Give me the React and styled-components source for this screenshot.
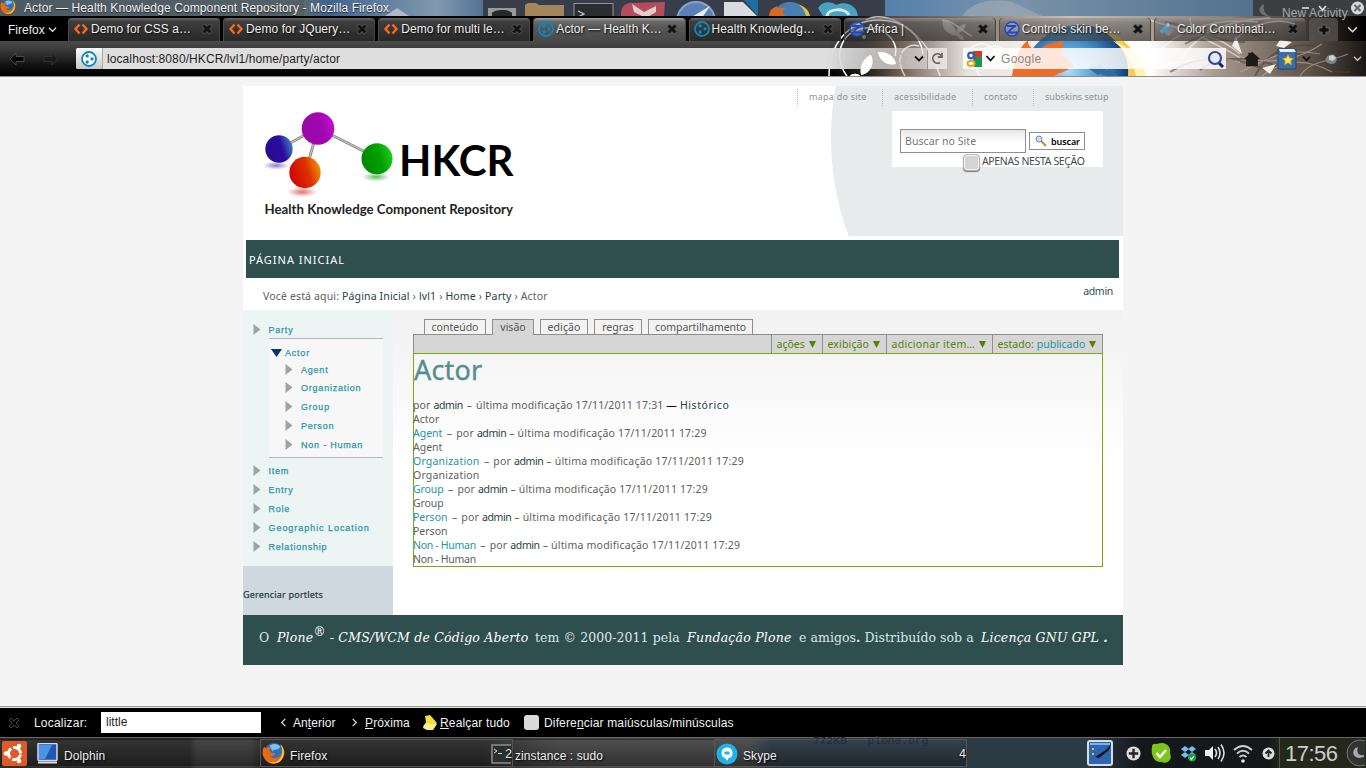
import React from 'react';
import styled, { createGlobalStyle, css } from 'styled-components';

const Global = createGlobalStyle`
  * { box-sizing: border-box; }
  html, body { margin: 0; padding: 0; background: #f4f4f4; }
  body { width: 1366px; height: 768px; overflow: hidden; }
  a { color: inherit; text-decoration: none; }
  svg { display: block; flex: none; }
`;

const sans = '"Liberation Sans", Arial, sans-serif';
const humanist = '"Noto Sans", "Open Sans", sans-serif';

const Screen = styled.div`
  width: 1366px;
  height: 768px;
  display: flex;
  flex-direction: column;
  overflow: hidden;
  font-family: ${sans};
  font-size: 12px;
  background: #f4f4f4;
`;

/* ---------- window chrome ---------- */
const Chrome = styled.header`
  position: relative;
  height: 77px;
  flex: none;
  background: #000;
  border-bottom: 1px solid #8d8d8d;
`;
const Art = styled.svg`
  position: absolute;
  left: 0;
  top: 0;
`;
const TitleBar = styled.div`
  position: relative;
  height: 16px;
  display: flex;
  align-items: center;
  justify-content: space-between;
  padding-left: 24px;
  color: #f4f4f4;
`;
const TitleText = styled.span`
  font-size: 12px;
  letter-spacing: 0.11px;
  white-space: nowrap;
  text-shadow: 0 1px 1px #222;
`;
const Activity = styled.div`
  width: 84px;
  height: 16px;
  color: #a5a5a5;
  line-height: 14px;
  padding-top: 6px;
  letter-spacing: 0.1px;
  white-space: nowrap;
`;
const Tabs = styled.div`
  position: relative;
  height: 25px;
  display: flex;
  padding-top: 2px;
  color: #eee;
`;
const MenuButton = styled.div`
  width: 68px;
  padding-left: 8px;
  display: flex;
  align-items: center;
  gap: 3px;
  font-size: 12px;
`;
const Tab = styled.div`
  width: 152.3px;
  margin-right: 3px;
  display: flex;
  align-items: center;
  padding: 0 7px 1px 5px;
  border-radius: 4px 4px 0 0;
  text-shadow: 1px 1px 2px #000;
  background: ${p => p.$active
    ? 'linear-gradient(#a2a2a2, #6a6a6a 15%, #585858 40%, #484848)'
    : p.$glass
      ? 'linear-gradient(rgba(150,150,150,.7), rgba(95,95,95,.5) 20%, rgba(60,60,60,.62))'
      : 'linear-gradient(#6a6a6a, #3e3e3e 15%, #282828)'};
  box-shadow: inset 1px 0 0 #4a4a4a, inset -1px 0 0 #444;
`;
const TabLabel = styled.span`
  margin-left: 2px;
  width: 110px;
  flex: none;
  white-space: nowrap;
  letter-spacing: 0.05px;
`;
const NewTab = styled.div`
  width: 29px;
  display: grid;
  place-items: center;
  border-radius: 4px 4px 0 0;
  background: rgba(90,90,90,.7);
`;
const TabMenu = styled.div`
  width: 28px;
  display: grid;
  place-items: center;
`;
const NavBar = styled.div`
  position: relative;
  height: 35px;
  display: flex;
  align-items: center;
  padding: 0 3px 0 9px;
`;
const NavArrow = styled.div`
  width: ${p => p.$w}px;
`;
const UrlBar = styled.div`
  width: 851px;
  height: 21px;
  display: flex;
  align-items: center;
  background: linear-gradient(90deg, #dedede 750px, rgba(222,222,222,.66) 830px);
  color: #1e1e1e;
  border-radius: 2px 0 0 2px;
`;
const SiteBadge = styled.div`
  width: 27px;
  height: 21px;
  display: grid;
  place-items: center;
  background: linear-gradient(#fafafa, #c9c9c9);
  border-right: 1px solid #aaa;
  border-radius: 2px 0 0 2px;
`;
const Url = styled.span`
  margin-left: 4px;
  flex: 1;
  letter-spacing: 0.09px;
`;
const Reload = styled.div`
  width: 19px;
  height: 21px;
  margin: 0 16px 0 1px;
  display: grid;
  place-items: center;
  background: rgba(235,232,228,.85);
`;
const SearchBar = styled.div`
  width: 263px;
  height: 21px;
  display: flex;
  align-items: center;
  padding: 0 1px 0 3px;
  background: rgba(255,255,255,.84);
  color: #8e8886;
`;
const Hint = styled.span`
  flex: 1;
  margin-left: 5px;
  letter-spacing: 0.3px;
`;
const Tools = styled.div`
  flex: 1;
  display: flex;
  align-items: center;
  padding-left: 17px;
`;
const Tool = styled.div`
  width: ${p => p.$w}px;
`;

/* ---------- site ---------- */
const Viewport = styled.main`
  flex: 1;
  padding-top: 9px;
  background: #f4f4f4;
  border-bottom: 1px solid #8f9c86;
`;
const Site = styled.div`
  width: 880px;
  margin-left: 243px;
  background: #fff;
  font-family: ${humanist};
  font-size: 10.5px;
  color: #606060;
`;
const SiteHeader = styled.div`
  height: 154px;
  border-bottom: 4px solid #fff;
  display: flex;
  justify-content: space-between;
  background: radial-gradient(circle at 868px 52px, #e7ebeb 279.5px, #fff 280.5px);
`;
const HeaderTools = styled.div`
  width: 326px;
  display: flex;
  flex-direction: column;
`;
const SiteActions = styled.div`
  display: flex;
  margin-top: 3px;
  height: 17px;
  font-size: 9px;
  color: #8f9393;
`;
const SiteAction = styled.a`
  width: ${p => p.$w}px;
  padding-left: 11px;
  line-height: 16px;
  border-left: 1px dotted #b9bcbc;
  letter-spacing: ${p => p.$ls}px;
  white-space: nowrap;
`;
const SearchBox = styled.div`
  width: 211px;
  height: 56px;
  margin: 5px 0 0 95px;
  padding: 18px 0 0 8px;
  background: #fff;
`;
const SearchRow = styled.div`
  display: flex;
  gap: 3px;
  align-items: center;
`;
const SearchField = styled.div`
  width: 126px;
  height: 24px;
  padding-left: 4px;
  border: 1px solid #8f8f8f;
  background: linear-gradient(#e8e8e8, #fff 12px);
  line-height: 22px;
  letter-spacing: 0.08px;
  color: #75787b;
`;
const SearchButton = styled.div`
  width: 56px;
  height: 18px;
  border: 1px solid #8f8f8f;
  display: flex;
  align-items: center;
  gap: 4px;
  padding-left: 5px;
  font-size: 9px;
  font-weight: 600;
  letter-spacing: -0.1px;
  color: #000;
`;
const SectionOnly = styled.div`
  display: flex;
  align-items: flex-start;
  margin-left: 63px;
  gap: 2px;
  line-height: 16px;
  white-space: nowrap;
  letter-spacing: -0.37px;
  color: #4a4a4a;
`;
const Checkbox = styled.span`
  width: 17px;
  height: 17px;
  flex: none;
  margin-top: 1px;
  border: 1px solid #b5b5b5;
  border-radius: 4px;
  box-shadow: 0 1px 1px #777, inset 0 0 0 1px #f4f4f4;
  background: #d6d4d1;
`;
const GlobalNav = styled.nav`
  height: 38px;
  margin: 0 4px 0 3px;
  padding-left: 3px;
  line-height: 40px;
  background: #2f4f4f;
  color: #fff;
  font-size: 11px;
  letter-spacing: 0.98px;
`;
const Crumbs = styled.div`
  height: 32px;
  padding: 0 10px 0 20px;
  display: flex;
  justify-content: space-between;
  line-height: 36px;
`;
const Trail = styled.span`
  letter-spacing: 0.15px;
`;
const User = styled.a`
  color: #2f4f4f;
  line-height: 27px;
  letter-spacing: -0.3px;
`;
const Dark = styled.a`
  color: #1f4242;
`;
const Author = styled(Dark)`
  letter-spacing: -0.4px;
`;
const Wide = styled(Dark)`
  letter-spacing: 0.6px;
`;
const Dash = styled.span`
  margin: 0 ${p => p.$r || 0}px 0 ${p => p.$l || 0}px;
`;
const Columns = styled.div`
  display: flex;
  height: 305px;
`;
const Sidebar = styled.aside`
  width: 150px;
  display: flex;
  flex-direction: column;
  background: #ecf4f4;
`;
const Tree = styled.div`
  height: 256px;
  padding-top: 10px;
  font-family: ${sans};
  font-size: 9px;
  color: #2e97a8;
`;
const TreeRow = styled.div`
  height: ${p => p.$h || 19}px;
  display: flex;
  align-items: center;
  padding-left: ${p => p.$pad ?? 9.5}px;
  gap: ${p => p.$gap ?? 8}px;
  letter-spacing: ${p => p.$ls ?? 0.78}px;
  -webkit-text-stroke: 0.25px #2e97a8;
  white-space: nowrap;
`;
const Branch = styled.div`
  width: 114px;
  height: 120px;
  margin: -1px 0 3px 26px;
  padding-top: 6px;
  border-top: 1px solid #b4b8ba;
  border-bottom: 1px solid #b4b8ba;
  background: #f7f7f7;
`;
const Manage = styled.div`
  flex: 1;
  padding-top: 20px;
  line-height: 18px;
  background: #cfd8df;
  color: #203c3c;
  font-size: 9px;
  letter-spacing: 0.2px;
  -webkit-text-stroke: 0.2px #203c3c;
`;
const Content = styled.section`
  flex: 1;
  padding: 9px 20px 0;
  background: linear-gradient(#f1f1f1, #fff 150px);
`;
const ViewTabs = styled.div`
  display: flex;
  gap: 6px;
  height: 15px;
  padding-left: 11px;
`;
const ViewTab = styled.a`
  width: ${p => p.$w}px;
  height: ${p => (p.$on ? 16 : 15)}px;
  border: 1px solid #8f8f8f;
  border-bottom: 0;
  background: ${p => (p.$on ? '#d6d6d6' : 'transparent')};
  position: relative;
  text-align: center;
  line-height: 15px;
  letter-spacing: ${p => p.$ls || 0}px;
  white-space: nowrap;
  color: #555;
`;
const ActionBar = styled.div`
  height: 19px;
  display: flex;
  justify-content: flex-end;
  border: 1px solid #8f8f8f;
  border-bottom: 0;
  background: #d6d6d6;
  color: #54830a;
  line-height: 18px;
`;
const Action = styled.div`
  width: ${p => p.$w}px;
  padding: 0 6px 0 4.5px;
  display: flex;
  align-items: center;
  justify-content: space-between;
  border-left: 1px solid #8f8f8f;
  letter-spacing: ${p => p.$ls || 0}px;
  white-space: nowrap;
`;
const Teal = styled.a`
  color: #2793a5;
  letter-spacing: ${p => p.$ls || 0}px;
`;
const Article = styled.article`
  height: 214px;
  border: 1px solid #74ae0b;
`;
const Heading = styled.h1`
  margin: 0;
  height: 44px;
  line-height: 32px;
  font-size: 27px;
  font-weight: 400;
  letter-spacing: 0.2px;
  -webkit-text-stroke: 0.3px #548d8d;
  color: #548d8d;
`;
const Line = styled.div`
  height: 14px;
  margin-left: -1px;
  line-height: 14px;
  white-space: nowrap;
  letter-spacing: ${p => p.$ls || 0}px;
`;
const Black = styled.span`
  color: #000;
`;
const Footer = styled.footer`
  height: 50px;
  display: flex;
  align-items: baseline;
  padding: 14px 0 0 16px;
  background: #2f4f4f;
  color: #dde6e6;
  font-family: "DejaVu Serif", serif;
  font-size: 12.5px;
  line-height: 18px;
  white-space: nowrap;
`;
const Run = styled.span`
  width: ${p => p.$w}px;
  flex: none;
  letter-spacing: ${p => p.$ls || 0}px;
  ${p => p.$em && css`
    font-style: italic;
    color: #fff;
  `}
  sup { font-size: 12px; line-height: 0; font-style: normal; vertical-align: 6px; }
`;

/* ---------- find bar and desktop panel ---------- */
const FindBar = styled.div`
  height: 31px;
  flex: none;
  display: flex;
  align-items: center;
  border-top: 1px solid #e8e8e8;
  border-bottom: 1px solid #666;
  background: #000;
  color: #f0f0f0;
`;
const FindCell = styled.div`
  width: ${p => p.$w}px;
  flex: none;
  display: flex;
  align-items: center;
  gap: ${p => p.$gap || 0}px;
  white-space: nowrap;
  letter-spacing: ${p => p.$ls || 0}px;
`;
const FindInput = styled.div`
  width: 160px;
  height: 21px;
  padding-left: 5px;
  line-height: 20px;
  background: #fff;
  color: #222;
`;
const FindCheck = styled.span`
  width: 15px;
  height: 15px;
  border-radius: 3px;
  background: #dcdad6;
`;
const Panel = styled.div`
  position: relative;
  height: 30px;
  flex: none;
  display: flex;
  align-items: center;
  background: linear-gradient(90deg, rgba(0,0,0,0) 190px, rgba(90,90,90,.4) 196px 250px, rgba(0,0,0,0) 262px),
    linear-gradient(90deg, #2b2b2b 0 480px, #484848 560px 750px, rgba(44,58,68,1) 770px 1090px, #15181b 1140px 1270px, #24281a 1280px);
  color: #eee;
`;
const Task = styled.div`
  width: ${p => p.$w}px;
  height: 28px;
  flex: none;
  display: flex;
  align-items: center;
  gap: ${p => p.$gap ?? 6}px;
  padding: 1px ${p => p.$pr || 0}px 0 ${p => p.$pl || 0}px;
  border: 1px solid ${p => (p.$frame ? '#565656' : 'transparent')};
  background: linear-gradient(rgba(255,255,255,.04), rgba(0,0,0,.32));
  text-shadow: 1px 1px 2px #000;
  white-space: nowrap;
`;
const TaskName = styled.span`
  padding-top: 4px;
  letter-spacing: 0.08px;
`;
const Count = styled.span`
  position: relative;
  z-index: 1;
  margin-left: auto;
`;
const TermIcon = styled.div`
  width: 23px;
  margin-left: -24px;
`;
const Ghost = styled.div`
  position: absolute;
  left: 813px;
  top: -3px;
  color: #1d2b33;
  font-family: "Liberation Mono", monospace;
  font-size: 11px;
  line-height: 12px;
  letter-spacing: 0.2px;
  white-space: pre;
`;
const Tray = styled.div`
  flex: 1;
  height: 30px;
  display: flex;
  align-items: center;
  padding-left: 120px;
`;
const TrayCell = styled.div`
  width: ${p => p.$w}px;
  margin-right: ${p => p.$mr || 0}px;
  display: grid;
  place-items: center;
  flex: none;
`;
const Clock = styled.div`
  width: 66px;
  padding-left: 5px;
  height: 30px;
  line-height: 32px;
  border-left: 1px solid #555;
  font-size: 22px;
  letter-spacing: -0.5px;
  color: #ccc;
`;

/* ---------- drawings ---------- */
const Chevron = ({ dir = 'down', s = 9, c = '#ddd', w = 1.4 }) => {
  const d = { down: 'M1 3l4 4 4-4', left: 'M7 1L3 5l4 4', right: 'M3 1l4 4-4 4' }[dir];
  return <svg width={s} height={s} viewBox="0 0 10 10"><path d={d} fill="none" stroke={c} strokeWidth={w} /></svg>;
};
const Cross = ({ c = '#121212', o = '#666' }) => (
  <svg width="12" height="12" viewBox="0 0 12 12">
    <path d="M1 3.500l2.500-2.500L6 3.500l2.500-2.500 2.500 2.500L8.500 6 11 8.500 8.500 11 6 8.500 3.500 11 1 8.500 3.500 6z" fill={c} stroke={o} strokeWidth=".8" />
  </svg>
);
const CodeIcon = () => (
  <svg width="16" height="16" viewBox="0 0 16 16">
    <path d="M6.500 3.500L2.500 8l4 4.500M9.500 3.500l4 4.500-4 4.500" fill="none" stroke="#ff6a13" strokeWidth="2.300" />
  </svg>
);
const PloneIcon = ({ bg = 'none' }) => (
  <svg width="16" height="16" viewBox="0 0 16 16">
    <circle cx="8" cy="8" r="7" fill={bg} stroke="#1088bd" strokeWidth="1.800" />
    <circle cx="6.200" cy="4.900" r="1.700" fill="#1088bd" />
    <circle cx="11" cy="7.900" r="1.700" fill="#1088bd" />
    <circle cx="6.200" cy="11" r="1.700" fill="#1088bd" />
  </svg>
);
const ZIcon = () => (
  <svg width="16" height="16" viewBox="0 0 16 16">
    <circle cx="8" cy="8" r="7" fill="rgba(200,210,235,.35)" stroke="#1b49c4" strokeWidth="1.400" />
    <path d="M3 5h9C9 6 6 9 4 11.500h9.500" fill="none" stroke="#1b49c4" strokeWidth="1.800" />
  </svg>
);
const PaletteIcon = () => (
  <svg width="16" height="16" viewBox="0 0 16 16">
    <path d="M8 1l7 8-5 6-8-5z" fill="#7c8184" />
    <path d="M.5 10l2.500-3 2.500 2.500-2.500 3zM4 7l2.500-3L9 6.500l-2.500 3z" fill="#37a8dc" />
    <path d="M7 4l2-2.500L11 4 9 6.500z" fill="#8fc4e0" />
  </svg>
);
const Arrow = ({ flip, c, o }) => (
  <svg width="16" height="14" viewBox="0 0 16 14" transform={flip ? 'scale(-1 1)' : undefined}>
    <path d="M1 7l6-6v3.500h8v5H7V13z" fill={c} stroke={o} strokeWidth="1" />
  </svg>
);
const FirefoxShape = () => (
  <>
    <circle cx="12.500" cy="11.500" r="10.500" fill="#2d6fc0" />
    <path d="M8 4c4-3 9-2 11 1-2 4-7 2-8 5z" fill="#7fc3ee" />
    <path d="M2 5l3 2c2-2 4-2 5-1-2 1-3 3-1 5l5 1c-1 3-4 3-6 2 2 4 9 4 12-1 2-4 1-8-1-11 6 5 6 13 0 18-5 4-13 3-16-2C0 14 0 9 2 5z" fill="#ea6a10" />
    <path d="M19 2c5 5 5 13 0 18-4 3-8 3-12 1 6 1 11-1 13-6 2-4 1-9-1-13z" fill="#ffc933" />
  </>
);

const ChromeArt = () => (
  <Art width="1366" height="76" viewBox="0 0 1366 76">
    <defs>
      <linearGradient id="sky" x1="0" x2="1"><stop offset="0" stopColor="#4a5c68" /><stop offset=".22" stopColor="#5d6a70" /><stop offset=".24" stopColor="#3f6390" /><stop offset=".32" stopColor="#8299ad" /><stop offset=".36" stopColor="#496b91" /><stop offset=".65" stopColor="#5580ac" /><stop offset=".74" stopColor="#7b93aa" /><stop offset=".92" stopColor="#51718f" /></linearGradient>
      <linearGradient id="nav" x2="0" y2="1"><stop offset="0" stopColor="#4b4b4b" /><stop offset=".25" stopColor="#3a3a3a" /><stop offset=".7" stopColor="#111" /><stop offset="1" stopColor="#000" /></linearGradient>
      <linearGradient id="persona" x1="0" x2="1"><stop offset="0" stopColor="#111" stopOpacity="0" /><stop offset=".13" stopColor="#6b5a4d" /><stop offset=".26" stopColor="#e9e4df" /><stop offset=".6" stopColor="#fff" /><stop offset=".72" stopColor="#a89a8d" /><stop offset=".9" stopColor="#5b4f46" /><stop offset="1" stopColor="#1a1715" /></linearGradient>
      <linearGradient id="personaTop" x1="0" x2="1"><stop offset="0" stopColor="#111" stopOpacity="0" /><stop offset=".12" stopColor="#54483f" /><stop offset=".45" stopColor="#cbbfb4" /><stop offset=".75" stopColor="#8b7c70" /><stop offset=".93" stopColor="#29221d" /><stop offset="1" stopColor="#000" /></linearGradient>
      <radialGradient id="globe" cx=".4" cy=".4"><stop offset="0" stopColor="#a9dcf5" /><stop offset=".5" stopColor="#4d96cc" /><stop offset="1" stopColor="#123e78" /></radialGradient>
      <clipPath id="personaClip"><rect x="826" y="16" width="540" height="60" /></clipPath>
      <clipPath id="titleClip"><rect width="1366" height="16" /></clipPath>
    </defs>
    <rect width="1366" height="16" fill="url(#sky)" />
    <g clipPath="url(#titleClip)">
      <rect width="304" height="16" fill="#4e5a60" opacity=".6" />
      <g transform="translate(0 -1) scale(.66)"><FirefoxShape /></g>
      <rect x="483" width="402" height="16" fill="#373e49" />
      <rect x="488" y="8" width="28" height="10" fill="#9a9a9a" />
      <path d="M492 16v-3c3-4 17-4 20 0v3z" fill="#26282b" />
      <path d="M525 16V5l3-2h8l3 2h25v11z" fill="#a3865c" />
      <rect x="574" y="3.500" width="39" height="14" fill="#2a2e30" stroke="#929699" />
      <path d="M578 11l6 3-6 3" fill="none" stroke="#ccc" strokeWidth="1.200" />
      <path d="M621 16q-1-11 8-13l36-1-1 14z" fill="#b54c5b" />
      <path d="M632 4l12 8 12-6v6l-10 6-12-6z" fill="#e0cdd0" />
      <circle cx="696" cy="21" r="19" fill="#5a80b8" stroke="#8ca3c4" strokeWidth="2" />
      <path d="M690 18l20-12-8 12z" fill="#e6ecf4" />
      <path d="M724 2h19l14 14h-33z" fill="#d9dcde" />
      <path d="M744 0h14v16z" fill="#1d6fa3" />
      <circle cx="790" cy="20" r="18" fill="#477fb5" />
      <path d="M769 16c1-8 5-8 8-10 0 3 5 2 9 2-4 2-4 5-1 8z" fill="#d56a24" />
      <path d="M798 4c8 3 11 7 12 12h-4c-1-5-4-9-8-12z" fill="#e1bd45" />
      <path d="M818 8c6-8 14-6 18-3 12-5 21 2 22 11h-35z" fill="#49a1c2" />
      <path d="M827 16c1-8 19-8 22-1" fill="none" stroke="#dceaf0" strokeWidth="3" />
      <path d="M962 16c10-14 28-18 50-14l30 14z" fill="#a3adb8" opacity=".6" />
      <path d="M385 16l12-8 12 8z" fill="#c8cfd5" opacity=".7" />
      <rect x="1253" width="113" height="16" fill="#3b3f42" />
      <path d="M1264 4c-8 4-5 12 5 12-5-3-6-7-5-12z" fill="#6c7073" />
      <path d="M1302 8h7M1319 6l3.500 4 3.500-4" fill="none" stroke="#e4e4e4" strokeWidth="1.500" />
      <circle cx="1357.500" cy="8" r="6.500" fill="#d9d9d9" />
      <path d="M1354.500 5l6 6M1360.500 5l-6 6" stroke="#666" strokeWidth="2" />
    </g>
    <rect y="41" width="1366" height="35" fill="url(#nav)" />
    <g clipPath="url(#personaClip)">
      <rect x="828" y="16" width="538" height="26" fill="url(#personaTop)" />
      <rect x="828" y="41" width="538" height="35" fill="url(#persona)" />
      <circle cx="1080" cy="84" r="59" fill="url(#globe)" />
      <path d="M1012 76c2-14 6-28 16-36 0 10 8 10 14 8 6-6 16-5 22-8-4 8 2 10-2 14l12 12c-8 6-14 6-20 10z" fill="#ee6d27" />
      <path d="M1096 27c28 8 44 26 46 49h-14c2-20-8-36-32-49z" fill="#f8cd4e" />
      <path d="M1112 40c22 10 32 22 34 36h-10c-2-12-10-26-24-36z" fill="#fff3b0" />
      <path d="M1088 68l12-4 6 6-8 5zM1100 73l10-4 8 6-6 4z" fill="#2c6ba8" />
      <g fill="none" stroke="#fff" strokeWidth="1.500">
        <path d="M829 76c0-32 20-56 50-56 26 0 42 16 44 34" />
        <path d="M847 76c-14-18-8-44 18-48 20-2 34 14 30 28" />
        <path d="M866 20c20-12 60 10 74 56" opacity=".7" />
        <path d="M905 76c-12-20 0-34 14-30M942 20c12 0 20 12 30 16" opacity=".7" />
        <path d="M965 60c6-22 26-20 30-6M980 76c-12-16 4-36 22-28" opacity=".8" />
        <path d="M1150 20c30 12 60 8 90 34M1158 52c26-26 60-34 100-30M1180 60c20-30 50-40 90-42M1140 66c40 0 70-14 100-4M1190 18c0 20 30 26 50 40M1235 40c16-18 44-22 60-16" opacity=".55" />
      </g>
      <g fill="none" stroke="#4e4036" opacity=".55" strokeWidth="2">
        <path d="M1165 22c30 4 50 22 80 20M1185 44c24-14 52-20 76-6M1170 72c30-18 60-18 96-2M1200 70c20-16 60-14 84 0M1255 76c10-20 30-34 60-30M1290 50c20 4 20 24 60 22" />
      </g>
      <g fill="none" stroke="#cfc4b8" opacity=".5" strokeWidth="1.200">
        <path d="M1240 72c20-8 40-26 80-18M1262 76c20-16 44-18 70-4M1238 56c30 10 60 4 84-12M1300 76c10-16 30-14 48-22" />
      </g>
      <path d="M861 75c-2-10 4-18 10-20 4 8 0 18-10 20zM878 52c10 0 16 4 18 12-8 2-16-2-18-12zM850 76c2-3 8-3 10 0z" fill="#fff" />
      <path d="M957 36c-12-2-16-10-14-16 8 2 12 6 13 12 2-6 6-8 10-8-1 6-4 8-8 9 4 2 6 4 6 7-4 0-6-2-7-4z" fill="#e8e4e0" opacity=".6" />
      <path d="M1236 36l6 18-10-8zM1280 40l12 2-8 6-8-2zM1262 68l14-4-6 10z" fill="#f4efe9" />
      <circle cx="864" cy="37" r="2" fill="#bbb" />
    </g>
  </Art>
);
const Leaves = styled(Art)`
  left: 846px;
  top: 10px;
`;

const Logo = () => (
  <svg width="290" height="150" viewBox="0 0 290 150">
    <defs>
      {[['pu', '#c40fd0', '#a006b0', '#9a08a8'], ['bl', '#3f86cc', '#2c0c9c', '#2a0c90'], ['re', '#ee9a00', '#dd3300', '#d40a00'], ['gr', '#1fd01f', '#02a002', '#008c00']].map(([id, a, b, c]) => (
        <linearGradient key={id} id={id} x1="1" y1=".3" x2="0.100" y2=".6"><stop offset="0" stopColor={a} /><stop offset=".45" stopColor={b} /><stop offset="1" stopColor={c} /></linearGradient>
      ))}
      <radialGradient id="shB"><stop offset="0" stopColor="#5a3ec0" stopOpacity=".7" /><stop offset="1" stopColor="#5a3ec0" stopOpacity="0" /></radialGradient>
      <radialGradient id="shR"><stop offset="0" stopColor="#e03030" stopOpacity=".7" /><stop offset="1" stopColor="#e03030" stopOpacity="0" /></radialGradient>
      <radialGradient id="shG"><stop offset="0" stopColor="#1fa01f" stopOpacity=".7" /><stop offset="1" stopColor="#1fa01f" stopOpacity="0" /></radialGradient>
    </defs>
    <ellipse cx="33" cy="79.500" rx="13" ry="4" fill="url(#shB)" />
    <ellipse cx="59" cy="106" rx="15" ry="5" fill="url(#shR)" />
    <ellipse cx="133" cy="91" rx="14" ry="4.500" fill="url(#shG)" />
    <path d="M75 42L36 63M75 42L62 88M75 42l59 30" stroke="#9a8b8b" strokeWidth="3" />
    <path d="M75 42l59 30M75 42L36 63M75 42L62 88" stroke="#cfc4c4" strokeWidth="1" />
    <circle cx="75" cy="42.500" r="16.300" fill="url(#pu)" />
    <circle cx="36" cy="63" r="13.700" fill="url(#bl)" />
    <circle cx="62" cy="86.500" r="15.700" fill="url(#re)" />
    <circle cx="134" cy="72.700" r="15.500" fill="url(#gr)" />
    <text x="156" y="90" fontFamily="Lato, sans-serif" fontWeight="700" fontSize="42.500" textLength="114.500" lengthAdjust="spacingAndGlyphs" fill="#000">HKCR</text>
    <text x="21.500" y="127.500" fontFamily="Lato, sans-serif" fontWeight="700" fontSize="12.500" textLength="248.500" lengthAdjust="spacingAndGlyphs" fill="#222">Health Knowledge Component Repository</text>
  </svg>
);

const Tri = ({ open }) => open
  ? <svg width="11" height="8" viewBox="0 0 11 8"><path d="M0 0h11L5.500 8z" fill="#0b3266" /></svg>
  : <svg width="8" height="11" viewBox="0 0 8 11"><path d="M.5 0v11L7.500 5.500z" fill="#9da3a6" /></svg>;
const Down = () => <svg width="7" height="7" viewBox="0 0 7 7"><path d="M0 0h7L3.500 7z" fill="#4f8300" /></svg>;

const MagnifierSmall = () => (
  <svg width="12" height="12" viewBox="0 0 12 12">
    <path d="M6 6l5 5" stroke="#d9822b" strokeWidth="2" />
    <circle cx="4" cy="4" r="3" fill="#c5e2fb" stroke="#6f8fb5" />
  </svg>
);

const tabs = [
  { icon: <CodeIcon />, label: 'Demo for CSS a…' },
  { icon: <CodeIcon />, label: 'Demo for JQuery…' },
  { icon: <CodeIcon />, label: 'Demo for multi le…' },
  { icon: <PloneIcon />, label: 'Actor — Health K…', active: true },
  { icon: <PloneIcon />, label: 'Health Knowledg…' },
  { icon: <ZIcon />, label: 'Africa |', glass: true },
  { icon: <ZIcon />, label: 'Controls skin be…', glass: true },
  { icon: <PaletteIcon />, label: 'Color Combinati…', glass: true },
];
const entries = [
  { name: 'Agent', ls: 0 },
  { name: 'Organization', ls: 0.2 },
  { name: 'Group', ls: -0.1 },
  { name: 'Person', ls: 0 },
  { name: 'Non - Human', ls: -0.3 },
];
const sections = [
  { name: 'Item' }, { name: 'Entry' }, { name: 'Role' },
  { name: 'Geographic Location', ls: 0.95 }, { name: 'Relationship' },
];

export default function App() {
  return (
    <Screen>
      <Global />
      <Chrome>
        <ChromeArt />
        <TitleBar>
          <TitleText>Actor — Health Knowledge Component Repository - Mozilla Firefox</TitleText>
          <Activity>New Activity</Activity>
        </TitleBar>
        <Tabs>
          <MenuButton>Firefox <Chevron /></MenuButton>
          {tabs.map(t => (
            <Tab key={t.label} $active={t.active} $glass={t.glass}>
              {t.icon}<TabLabel>{t.label}</TabLabel><Cross />
            </Tab>
          ))}
          <NewTab><svg width="12" height="12" viewBox="0 0 12 12"><path d="M4 1h4v3h3v4H8v3H4V8H1V4h3z" fill="#111" stroke="#777" strokeWidth=".7" /></svg></NewTab>
          <TabMenu><Chevron s={11} /></TabMenu>
        </Tabs>
        <NavBar>
          <NavArrow $w={34}><Arrow c="#050505" o="#4c4c4c" /></NavArrow>
          <NavArrow $w={33}><Arrow flip c="#1b1b1b" o="#333" /></NavArrow>
          <UrlBar>
            <SiteBadge><PloneIcon bg="#fff" /></SiteBadge>
            <Url>localhost:8080/HKCR/lvl1/home/party/actor</Url>
            <svg width="16" height="16" viewBox="0 0 16 16"><path d="M8 1.500l2 4.500 4.500.3-3.500 3 1.200 4.700L8 11.500 3.800 14 5 9.300 1.500 6.300 6 6z" fill="none" stroke="#b5b0ab" /></svg>
            <NavArrow $w={18}><svg width="16" height="10" viewBox="0 0 16 10"><path d="M6 2.500l4 4 4-4" fill="none" stroke="#111" strokeWidth="1.800" /></svg></NavArrow>
          </UrlBar>
          <Reload><svg width="13" height="13" viewBox="0 0 13 13"><path d="M10.500 4A4.700 4.700 0 1 0 9 10.500M11 .8V5H6.800" fill="none" stroke="#6d6762" strokeWidth="1.800" /></svg></Reload>
          <SearchBar>
            <svg width="16" height="16" viewBox="0 0 16 16">
              <rect width="9" height="16" fill="#fff" /><rect x="7" width="9" height="6" fill="#d8352b" /><rect x="8" y="6" width="8" height="10" fill="#169a4b" />
              <circle cx="5" cy="4.500" r="2.800" fill="#fff" stroke="#2f5cc4" strokeWidth="2.200" /><path d="M8 6l2 2-3 2z" fill="#2f5cc4" /><ellipse cx="5" cy="12.500" rx="3.500" ry="2.400" fill="#fff" stroke="#e7a61a" strokeWidth="2" />
            </svg>
            <svg width="14" height="10" viewBox="0 0 14 10"><path d="M4.500 2L8.500 6.500 12.500 2" fill="none" stroke="#111" strokeWidth="1.800" /></svg>
            <Hint>Google</Hint>
            <svg width="18" height="18" viewBox="0 0 18 18"><path d="M11 12l5 5" stroke="#17245c" strokeWidth="3" /><circle cx="8" cy="8" r="6" fill="#e4ecfa" stroke="#39479b" strokeWidth="2.200" /></svg>
          </SearchBar>
          <Tools>
            <Tool $w={34}><svg width="18" height="18" viewBox="0 0 20 18"><path d="M10 1l9 8h-2.500v8h-13V9H1l5-4.500V2h2v1z" fill="#1c1b1a" /></svg></Tool>
            <Tool $w={25}><svg width="20" height="22" viewBox="0 0 20 22"><path d="M1 1h18v20H1z" fill="#3c6ea6" stroke="#1d4678" /><path d="M2 1h15l2 3H3z" fill="#e9eef3" /><path d="M11 6.500l1.700 3.500 3.800.4-2.800 2.600.8 3.800-3.500-2-3.500 2 .8-3.800L5.500 10.400l3.800-.4z" fill="#ffe45b" stroke="#c89a10" strokeWidth=".6" /></svg></Tool>
            <Tool $w={22}><Chevron c="#0a0a0a" w={1.8} /></Tool>
            <Tool $w={29}><svg width="14" height="12" viewBox="0 0 14 12"><path d="M2 5c2-4 8-5 10-1s-1 7-4 7-8-2-6-6z" fill="#7b8286" /><path d="M5 3l4-1 3 3-3 3-4-1z" fill="#c9ced0" /></svg></Tool>
            <Chevron c="#ccc" />
          </Tools>
        </NavBar>
        <Leaves width="60" height="66" viewBox="846 10 60 66">
          <path d="M861 75c-2-10 4-18 10-20 4 8 0 18-10 20zM878 52c10 0 16 4 18 12-8 2-16-2-18-12zM850 76c2-3 8-3 10 0z" fill="#fff" />
        </Leaves>
      </Chrome>

      <Viewport>
        <Site>
          <SiteHeader>
            <Logo />
            <HeaderTools>
              <SiteActions>
                <SiteAction $w={85} $ls={0.25}>mapa do site</SiteAction>
                <SiteAction $w={90} $ls={0.23}>acessibilidade</SiteAction>
                <SiteAction $w={61} $ls={0.15}>contato</SiteAction>
                <SiteAction $w={90} $ls={0.05}>subskins setup</SiteAction>
              </SiteActions>
              <SearchBox>
                <SearchRow>
                  <SearchField>Buscar no Site</SearchField>
                  <SearchButton><MagnifierSmall />buscar</SearchButton>
                </SearchRow>
                <SectionOnly><Checkbox />APENAS NESTA SEÇÃO</SectionOnly>
              </SearchBox>
            </HeaderTools>
          </SiteHeader>
          <GlobalNav>PÁGINA INICIAL</GlobalNav>
          <Crumbs>
            <Trail>Você está aqui: <Dark>Página Inicial</Dark> › <Dark>lvl1</Dark> › <Dark>Home</Dark> › <Dark>Party</Dark> › Actor</Trail>
            <User>admin</User>
          </Crumbs>
          <Columns>
            <Sidebar>
              <Tree>
                <TreeRow>
                  <Tri />Party
                </TreeRow>
                <Branch>
                  <TreeRow $h={16} $pad={2} $gap={3}><Tri open />Actor</TreeRow>
                  <TreeRow $h={17} $pad={16}><Tri />Agent</TreeRow>
                  {entries.slice(1).map(e => <TreeRow key={e.name} $pad={16}><Tri />{e.name}</TreeRow>)}
                </Branch>
                {sections.map(s => <TreeRow key={s.name} $ls={s.ls}><Tri />{s.name}</TreeRow>)}
              </Tree>
              <Manage>Gerenciar portlets</Manage>
            </Sidebar>
            <Content>
              <ViewTabs>
                <ViewTab $w={62}>conteúdo</ViewTab>
                <ViewTab $w={42} $on>visão</ViewTab>
                <ViewTab $w={48} $ls={0.1}>edição</ViewTab>
                <ViewTab $w={48}>regras</ViewTab>
                <ViewTab $w={105} $ls={-0.05}>compartilhamento</ViewTab>
              </ViewTabs>
              <ActionBar>
                <Action $w={51}>ações <Down /></Action>
                <Action $w={64} $ls={0.15}>exibição <Down /></Action>
                <Action $w={106} $ls={0.3}>adicionar item… <Down /></Action>
                <Action $w={110} $ls={0.03}><span>estado: <Teal>publicado</Teal></span> <Down /></Action>
              </ActionBar>
              <Article>
                <Heading>Actor</Heading>
                <Line $ls={0.15}>por <Author>admin</Author> <Dash $l={1} $r={1}>–</Dash> última modificação 17/11/2011 17:31 <Black>—</Black> <Wide>Histórico</Wide></Line>
                <Line>Actor</Line>
                {entries.map(e => (
                  <React.Fragment key={e.name}>
                    <Line $ls={0.2}><Teal $ls={e.ls}>{e.name}</Teal> <Dash $l={1.5} $r={1}>–</Dash> por <Author>admin</Author> – última modificação 17/11/2011 17:29</Line>
                    <Line $ls={e.ls}>{e.name}</Line>
                  </React.Fragment>
                ))}
              </Article>
            </Content>
          </Columns>
          <Footer>
            <Run $w={18}>O</Run>
            <Run $w={258} $ls={0.2} $em>Plone<sup>®</sup> - CMS/WCM de Código Aberto</Run>
            <Run $w={152} $ls={0.07}>tem © 2000-2011 pela</Run>
            <Run $w={112} $ls={0.22} $em>Fundação Plone</Run>
            <Run $w={182} $ls={0.05}>e amigos<b>.</b> Distribuído sob a</Run>
            <Run $w={127} $ls={0.18} $em>Licença GNU GPL <b>.</b></Run>
          </Footer>
        </Site>
      </Viewport>

      <FindBar>
        <FindCell $w={34}><svg width="27" height="12" viewBox="0 0 27 12"><path d="M9 3l2-2 3 3 3-3 2 2-3 3 3 3-2 2-3-3-3 3-2-2 3-3z" fill="none" stroke="#444" /></svg></FindCell>
        <FindCell $w={67} $ls={0.2}>Localizar:</FindCell>
        <FindInput>little</FindInput>
        <FindCell $w={18} />
        <FindCell $w={71} $gap={5} $ls={0.08}><Chevron dir="left" s={9} /><span>An<u>t</u>erior</span></FindCell>
        <FindCell $w={72} $gap={6} $ls={0.12}><Chevron dir="right" s={9} /><span><u>P</u>róxima</span></FindCell>
        <FindCell $w={102} $gap={2} $ls={0.15}>
          <svg width="16" height="16" viewBox="0 0 16 16"><path d="M3 1l5-1 7 8-4 5-10-1 3-5z" fill="#f6dc3c" /><path d="M2 10c3-2 5-2 7-1l6 0-4 6-6 0-4-2z" fill="#fff08a" /></svg>
          <span><u>R</u>ealçar tudo</span>
        </FindCell>
        <FindCell $w={240} $gap={5} $ls={0.15}><FindCheck /><span>Difere<u>n</u>ciar maiúsculas/minúsculas</span></FindCell>
      </FindBar>

      <Panel>
        <Ghost>772KB   plone.org</Ghost>
        <Task $w={32} $pl={1}>
          <svg width="25" height="25" viewBox="0 0 25 25"><rect width="25" height="25" rx="2" fill="#df5a24" /><circle cx="12.500" cy="12.500" r="6" fill="none" stroke="#fff" strokeWidth="3" strokeDasharray="10.560 2" strokeDashoffset="-1" /><circle cx="4" cy="12.500" r="2.300" fill="#fff" /><circle cx="17" cy="5" r="2.300" fill="#fff" /><circle cx="17" cy="20" r="2.300" fill="#fff" /></svg>
        </Task>
        <Task $w={228} $pl={4}>
          <svg width="21" height="21" viewBox="0 0 21 21"><rect x="1" y=".5" width="19" height="17" rx="1" fill="#1c58b4" stroke="#dcdcdc" strokeWidth="1.500" /><path d="M2 2h13L8 16H2z" fill="#4d95e4" /><rect x="1" y="18.500" width="19" height="2" fill="#ddd" /></svg>
          <TaskName>Dolphin</TaskName>
        </Task>
        <Task $w={253} $pl={1} $frame $gap={5}>
          <svg width="23" height="23" viewBox="0 0 24 24"><FirefoxShape /></svg>
          <TaskName>Firefox</TaskName><Count>2</Count>
        </Task>
        <Task $w={201} $pl={1} $gap={1}>
          <TermIcon><svg width="20" height="20" viewBox="0 0 20 20"><path d="M20 1H1v18h19" fill="#2c2f30" stroke="#8d8d8d" strokeWidth="1.500" /><path d="M3 5l3 2-3 2M7 9.500h4" fill="none" stroke="#ddd" /></svg></TermIcon>
          <TaskName>zinstance : sudo</TaskName>
        </Task>
        <Task $w={253} $pl={1} $frame $gap={5}>
          <svg width="22" height="22" viewBox="0 0 22 22"><circle cx="11" cy="11" r="10.500" fill="#22b0ec" /><path d="M11 4.500a5.500 5.500 0 0 1 1.500 10.800L11 18l-1.500-2.700A5.500 5.500 0 0 1 11 4.500z" fill="#fff" /><path d="M8.500 8.500h5v3h-5z" fill="#22b0ec" /></svg>
          <TaskName>Skype</TaskName><Count>4</Count>
        </Task>
        <Tray>
          <TrayCell $w={26} $mr={6}><svg width="26" height="26" viewBox="0 0 26 26"><rect x="1" y="1" width="24" height="24" rx="2" fill="#2a66b4" stroke="#d9dde2" strokeWidth="2" /><rect x="3" y="3" width="20" height="2" fill="#7fb0e4" /><path d="M5 8h2v2H5zM5 13h2v2H5z" fill="#ffb02e" /><path d="M8 17l11-7 5-6-2 6-10 8z" fill="#111" /></svg></TrayCell>
          <TrayCell $w={28}><svg width="15" height="15" viewBox="0 0 16 16"><circle cx="8" cy="8" r="7.500" fill="#ddd" /><path d="M8 3v10M3 8h10" stroke="#222" strokeWidth="2.500" /></svg></TrayCell>
          <TrayCell $w={28}><svg width="21" height="21" viewBox="0 0 21 21"><path d="M1 4q0-4 5-3 5-2 9 0 5 3 4 9 2 5-1 8-3 3-8 1-6 0-8-5-2-4-1-10z" fill="#7dc51a" /><path d="M5.500 10l3.500 4 6-7" fill="none" stroke="#fff" strokeWidth="2.400" /></svg></TrayCell>
          <TrayCell $w={26}><svg width="17" height="17" viewBox="0 0 17 17"><path d="M5 1l4 3-4 3-4-3zM12 1l4 3-4 3-4-3zM5 7l4 3-4 3-4-3zM12 7l4 3-4 3-4-3z" fill="#75bfef" /><circle cx="12" cy="12.500" r="4" fill="#1c9c46" /><path d="M10 12.500l1.500 2 2.500-3.500" fill="none" stroke="#fff" strokeWidth="1.200" /></svg></TrayCell>
          <TrayCell $w={28}><svg width="22" height="20" viewBox="0 0 22 20"><path d="M1 7h4l4-4v14l-4-4H1z" fill="#eee" /><path d="M11 6q3 4 0 8M14 4q4 6 0 12M17 1.500q6 8.500 0 17" fill="none" stroke="#ddd" strokeWidth="1.600" /></svg></TrayCell>
          <TrayCell $w={28}><svg width="20" height="19" viewBox="0 0 20 19"><path d="M1 6q9-8 18 0M4 9.500q6-5.500 12 0M6.500 13q3.500-3 7 0" fill="none" stroke="#ccc" strokeWidth="1.800" /><circle cx="10" cy="17" r="1.800" fill="#eee" /></svg></TrayCell>
          <TrayCell $w={22}><svg width="13" height="13" viewBox="0 0 13 13"><circle cx="6.500" cy="6.500" r="6" fill="#ddd" /><path d="M6.500 10V4M3.500 6.500l3-3 3 3" fill="none" stroke="#222" strokeWidth="1.800" /></svg></TrayCell>
          <Clock>17:56</Clock>
          <svg width="20" height="28" viewBox="0 0 20 28"><circle cx="15" cy="14" r="13" fill="#333" stroke="#777" /><path d="M13 8c-6 1-7 10 1 11l5-1v-2c-5 1-8-2-6-8z" fill="#aaa" /></svg>
        </Tray>
      </Panel>
    </Screen>
  );
}
